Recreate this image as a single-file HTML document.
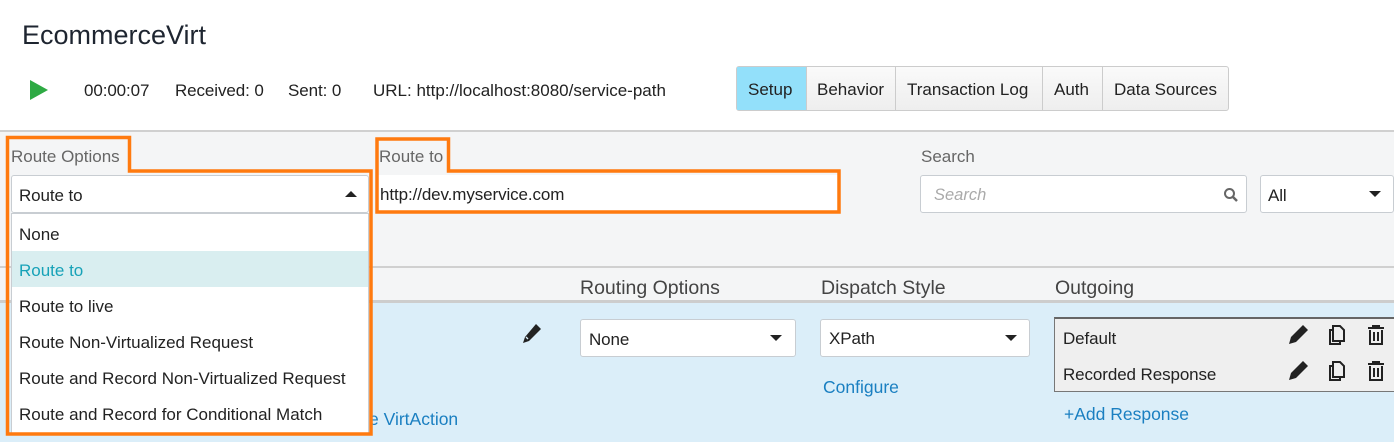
<!DOCTYPE html>
<html><head><meta charset="utf-8"><style>
*{box-sizing:border-box;margin:0;padding:0}
body{width:1394px;height:442px;overflow:hidden;background:#fff;font-family:"Liberation Sans",sans-serif;color:#222;position:relative}
.a{position:absolute;white-space:nowrap}
.t{font-size:17px;letter-spacing:-0.1px}
.sel{position:absolute;background:#fff;border:1px solid #c8cdd2;border-radius:3px}
.caret{position:absolute;width:0;height:0;border-left:6px solid transparent;border-right:6px solid transparent;border-top:6px solid #222}
.lbl{color:#666;font-size:17px}
</style></head><body>
<div class="a" style="left:22px;top:20px;font-size:27px;color:#1e2530">EcommerceVirt</div>
<svg class="a" style="left:28px;top:79px" width="22" height="22"><polygon points="2,1 20,11 2,21" fill="#2eaa44"/></svg>
<div class="a t" style="left:84px;top:81px">00:00:07</div>
<div class="a t" style="left:175px;top:81px">Received: 0</div>
<div class="a t" style="left:288px;top:81px">Sent: 0</div>
<div class="a t" style="left:373px;top:81px;letter-spacing:0">URL: http://localhost:8080/service-path</div>
<div class="a" style="left:736px;top:66px;width:493px;height:45px;border:1px solid #ccc;border-radius:3px;background:linear-gradient(#fafafa,#eee);display:flex;font-size:17px">
<div style="width:70px;background:#93e0fa;border-right:1px solid #ccc;padding:13px 0 0 11px">Setup</div>
<div style="width:89px;border-right:1px solid #ccc;padding:13px 0 0 10px">Behavior</div>
<div style="width:147px;border-right:1px solid #ccc;padding:13px 0 0 11px">Transaction Log</div>
<div style="width:60px;border-right:1px solid #ccc;padding:13px 0 0 11px">Auth</div>
<div style="flex:1;padding:13px 0 0 11px">Data Sources</div>
</div>
<div class="a" style="left:0;top:130px;width:1394px;height:137px;background:#f4f5f6;border-top:2px solid #d0d0d0"></div>
<div class="a" style="left:0;top:266px;width:1394px;height:37px;background:#f4f5f6;border-top:2px solid #d0d0d0;border-bottom:3px solid #cdcdcd"></div>
<div class="a" style="left:0;top:303px;width:1394px;height:139px;background:#dbeef9"></div>

<div class="a lbl" style="left:11px;top:147px">Route Options</div>
<div class="a lbl" style="left:379px;top:147px">Route to</div>
<div class="a lbl" style="left:921px;top:147px">Search</div>
<div class="sel" style="left:920px;top:175px;width:327px;height:38px"><span class="a" style="left:13px;top:10px;font-style:italic;color:#aaa;font-size:16.5px">Search</span>
<svg class="a" style="left:302px;top:11px" width="16" height="16"><circle cx="6.5" cy="6.5" r="4.5" fill="none" stroke="#666" stroke-width="2"/><line x1="10" y1="10" x2="14" y2="14" stroke="#666" stroke-width="2.5"/></svg></div>
<div class="sel" style="left:1260px;top:175px;width:134px;height:38px"><span class="a t" style="left:7px;top:10px">All</span><div class="caret" style="left:108px;top:15px"></div></div>
<div class="a" style="left:378px;top:175px;width:460px;height:38px;background:#fff"></div>
<div class="a t" style="left:380px;top:185px">http://dev.myservice.com</div>

<div class="sel" style="left:11px;top:175px;width:358px;height:38px"><span class="a t" style="left:7px;top:10px">Route to</span><div class="caret" style="left:333px;top:15px;border-top:0;border-bottom:6px solid #222"></div></div>
<div class="a" style="left:11px;top:213px;width:358px;height:221px;background:#fff;border:1px solid #c8cdd2;font-size:17px">
<div class="a" style="left:7px;top:11px">None</div>
<div class="a" style="left:0;top:37px;width:356px;height:36px;background:#d9eef0"></div>
<div class="a" style="left:7px;top:47px;color:#17a2b8">Route to</div>
<div class="a" style="left:7px;top:83px">Route to live</div>
<div class="a" style="left:7px;top:119px">Route Non-Virtualized Request</div>
<div class="a" style="left:7px;top:155px">Route and Record Non-Virtualized Request</div>
<div class="a" style="left:7px;top:191px">Route and Record for Conditional Match</div>
</div>
<div class="a" style="left:369px;top:409px;color:#1a7fc1;font-size:17.5px">e VirtAction</div>

<svg class="a" style="left:0;top:0" width="1394" height="442"><g fill="none" stroke="#ff7a0f" stroke-width="3.5">
<polygon points="7.5,137.5 129.5,137.5 129.5,171 371,171 371,434 7.5,434"/>
<polygon points="377,139 448.5,139 448.5,171 839,171 839,212 377,212"/></g></svg>

<div class="a" style="left:580px;top:277px;font-size:19.5px;color:#444">Routing Options</div>
<div class="a" style="left:821px;top:277px;font-size:19.5px;color:#444">Dispatch Style</div>
<div class="a" style="left:1055px;top:277px;font-size:19.5px;color:#444">Outgoing</div>

<svg class="a" style="left:521px;top:322px" width="22" height="22" viewBox="0 0 22 22"><path d="M15 2l5 5-12 12-6 2 2-6z" fill="#222"/><path d="M5 15l2 2" stroke="#dbeef9" stroke-width="1.3"/></svg>
<div class="sel" style="left:580px;top:319px;width:216px;height:38px"><span class="a t" style="left:8px;top:10px">None</span><div class="caret" style="left:189px;top:15px"></div></div>
<div class="sel" style="left:820px;top:319px;width:210px;height:38px"><span class="a t" style="left:8px;top:9px">XPath</span><div class="caret" style="left:184px;top:15px"></div></div>
<div class="a" style="left:823px;top:377px;color:#1a7fc1;font-size:17.5px">Configure</div>

<div class="a" style="left:1054px;top:317px;width:345px;height:75px;background:#efefef;border:1px solid #777;border-top:2px solid #666"></div>
<div class="a t" style="left:1063px;top:329px">Default</div>
<div class="a t" style="left:1063px;top:365px">Recorded Response</div>
<div class="a" style="left:1064px;top:404px;color:#1a7fc1;font-size:17.5px">+Add Response</div>
<svg class="a" style="left:1286px;top:322px" width="108" height="64">
<g id="r"><path d="M17 3l5 5-12 12-7 2 2-7z" fill="#222"/>
<path d="M47 8h-3v14h10v-3M47 4h7l4 4v11h-11z" fill="none" stroke="#222" stroke-width="2"/>
<path d="M82 6h16M87 6v-2h6v2M84 8v14h12v-14M88 10v9M92 10v9" fill="none" stroke="#222" stroke-width="2"/></g>
<use href="#r" y="36"/></svg>
</body></html>
